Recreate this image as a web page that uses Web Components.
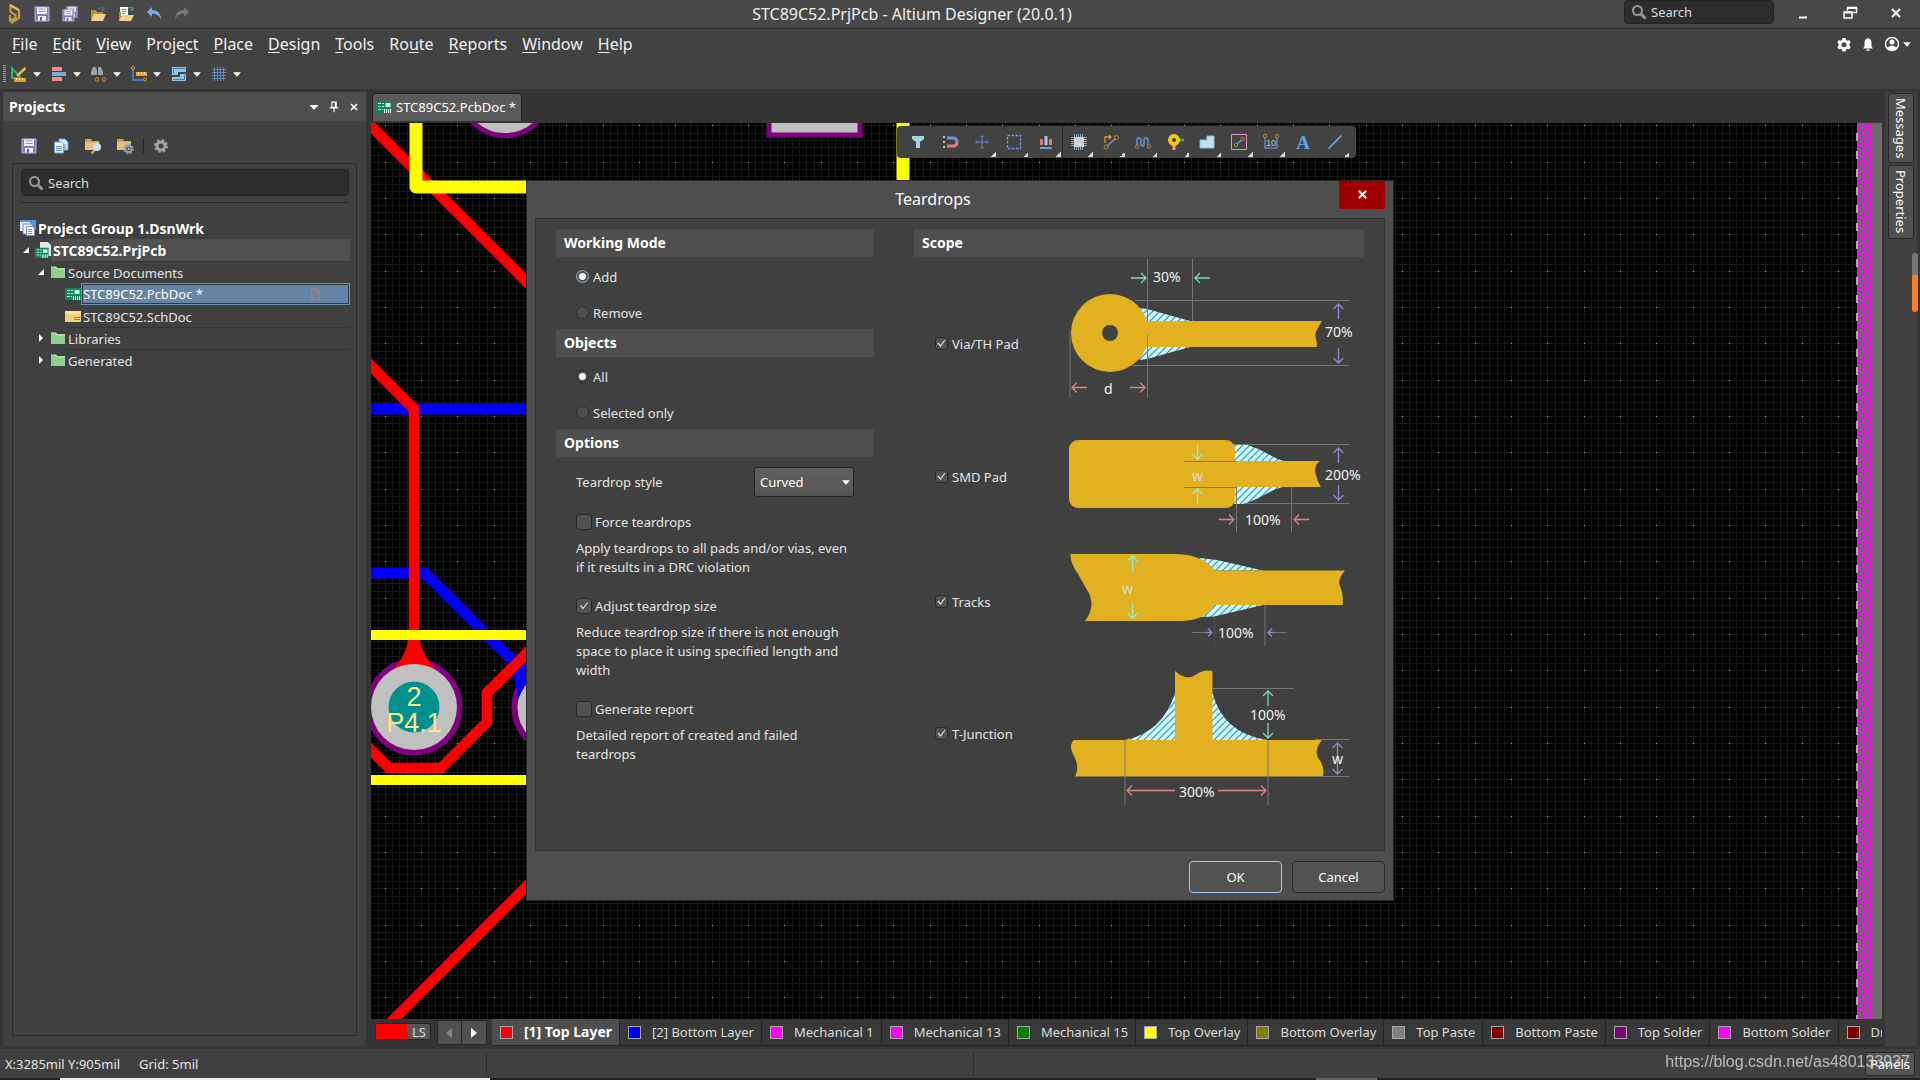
<!DOCTYPE html>
<html lang="en">
<head>
<meta charset="utf-8">
<title>STC89C52.PrjPcb - Altium Designer (20.0.1)</title>
<style>
    html, body { height: 100%; }
    body {
        margin: 0;
        display: flex;
        flex-direction: column;
        overflow: hidden;
        background: #353535;
        color: #e4e4e4;
        font: 13px/18px "Noto Sans", "Open Sans", sans-serif;
    }
    main {
        flex: 1;
        min-height: 0;
        display: flex;
        padding: 3px;
    }
    .document {
        flex: 1;
        min-width: 0;
        display: flex;
        flex-direction: column;
        margin: 0 3px 0 5px;
    }
    pcb-canvas { flex: 1; min-height: 0; }
    .watermark {
        position: fixed;
        right: 10px;
        bottom: 8px;
        color: rgba(225, 225, 225, .75);
        font: 16px/20px "Liberation Sans", sans-serif;
        pointer-events: none;
    }
</style>
</head>
<body>
<title-bar></title-bar>
<menu-bar></menu-bar>
<tool-strip></tool-strip>
<main>
    <projects-panel></projects-panel>
    <div class="document">
        <doc-tabs></doc-tabs>
        <pcb-canvas><active-bar></active-bar></pcb-canvas>
        <layer-tabs></layer-tabs>
    </div>
    <side-dock></side-dock>
</main>
<status-bar></status-bar>
<teardrop-dialog></teardrop-dialog>
<div class="watermark">https://blog.csdn.net/as480133937</div>

<script>
const FLOPPY = `<path d="M1 1h14v14H1z" fill="#7f7fb8"/><path d="M3 1h10v7H3z" fill="#f4f4fb"/><path d="M4.500 3h7M4.500 5.500h7" stroke="#8c8cbc"/><path d="M4 10h8v5H4z" fill="#eeeef8"/><path d="M6 11h2v4H6z" fill="#5b5b96"/><path d="M1 1h14v14H1z" fill="none" stroke="#b4b4dc"/>`;
const BOARD = `<path d="M0 2h16v12H0z" fill="#0b8a5c"/><path d="M2 4.500h3M2 7.500h3M2 10.500h3M6 4.500h2M6 7.500h2M6 10.500h1" stroke="#c8f4e0"/><path d="M9.500 4h5v4h-5z" fill="#d8f8ec"/><path d="M8.500 10v4M10.500 10v4M12.500 10v4M14.500 10v4" stroke="#eafff6"/>`;
const FOLDER = `<path d="M0 1h6l1 2h7v9H0z" fill="#cfa058"/><path d="M0 4h14v8H0z" fill="#e8bf7c"/>`;
const GEAR = `<circle cx="8" cy="8" r="4" fill="none" stroke="currentColor" stroke-width="3"/><circle cx="8" cy="8" r="6" fill="none" stroke="currentColor" stroke-width="2" stroke-dasharray="2.400 2.310"/>`;

// 16x16 artwork, keyed by name
const ICONS = {
    logo: `<path d="M4.500 6V-.5L13 4.500V12l-8 5M4.500 6l5 3v3L4 14.500V9" fill="none" stroke="#c39a4a" stroke-width="2.200"/><path d="M4.500-2L13 3v2L4.500 0z" fill="#e2c07a"/>`,
    save: FLOPPY,
    saveAll: `<g transform="translate(4 0) scale(.75)">${FLOPPY}</g><g transform="translate(0 3) scale(.8)">${FLOPPY}</g>`,
    open: `<path d="M1 4h5l1 2h6v9H1z" fill="#c08d45"/><path d="M4 8h12l-3 7H1z" fill="#f5cf92"/><path d="M8 3q4-3 6 1m0-3v3h-3" fill="none" stroke="#3c82a8"/>`,
    openDoc: `<path d="M2 1h8v9H2z" fill="#fff"/><path d="M3.500 3.500h5M3.500 5.500h5M3.500 7.500h3" stroke="#6a86b4"/><path d="M1 6h2v9H1z" fill="#c08d45"/><path d="M4 9h12l-3 6H1z" fill="#f5cf92"/><path d="M10 2q4-2 5 2m0-3v3h-3" fill="none" stroke="#4fa0c8"/>`,
    undo: `<path d="M1 6l5-5v3q9 0 9 10q-2-6.500-9-6.500V11z" fill="#7fa9ea"/>`,
    redo: `<path d="M15 6l-5-5v3q-9 0-9 10q2-6.500 9-6.500V11z" fill="#787878"/>`,
    search: `<circle cx="6.500" cy="6.500" r="4.500" fill="none" stroke="currentColor" stroke-width="2"/><path d="M10 10l4.500 4.500" stroke="currentColor" stroke-width="3"/>`,
    minimize: `<path d="M4 12.500h8" stroke="currentColor" stroke-width="2"/>`,
    restore: `<path d="M5.500 5.500V2.500h9v5h-4M2 7h8v6H2z" fill="none" stroke="currentColor" stroke-width="1.500"/><path d="M2 7.500h8M5 3h10" stroke="currentColor" stroke-width="2"/>`,
    close: `<path d="M4 4l8 8M12 4l-8 8" stroke="currentColor" stroke-width="2.200"/>`,
    cog: `<path d="M6.500 2h3l.4 1.800 1.500.9 1.800-.6 1.500 2.600-1.400 1.300v1.500l1.400 1.300-1.500 2.600-1.800-.6-1.500.9-.4 1.800h-3l-.4-1.800-1.500-.9-1.800.6L1.300 10.800l1.400-1.300V8L1.300 6.700l1.500-2.600 1.800.6 1.500-.9z" fill="currentColor"/><circle cx="8" cy="8.700" r="2.500" fill="#424242"/>`,
    bell: `<path d="M8 2q3.500 1 3.500 5v3.500l1.500 2H3l1.500-2V7Q4.500 3 8 2z" fill="currentColor"/><path d="M6.500 14h3" stroke="currentColor" stroke-width="1.500"/>`,
    user: `<circle cx="8" cy="8" r="6.500" fill="none" stroke="currentColor" stroke-width="1.500"/><circle cx="8" cy="6" r="2.600" fill="currentColor"/><path d="M3 12q5-5 10 0-5 4-10 0z" fill="currentColor"/>`,
    drafting: `<path d="M1 2v10h9z" fill="none" stroke="#28b478" stroke-width="2"/><path d="M14.500 2L6 10" stroke="#f0b040" stroke-width="2.500"/><path d="M3 12h12v4H3z" fill="#f09a28"/><path d="M5.500 12v2M8.500 12v2M11.500 12v2" stroke="#fff0c0"/>`,
    align: `<path d="M1 1h10v4H1zM1 11h10v4H1z" fill="#f08c8c"/><path d="M1 6h14v4H1z" fill="#70aee4"/>`,
    find: `<path d="M2 1h3l1 4v4H0V6zM7 1h3l2 5v3H7V5z" fill="#96a4ac"/><circle cx="6" cy="13.500" r="1.800" fill="none" stroke="#d89a20"/><circle cx="13" cy="13.500" r="1.800" fill="none" stroke="#d89a20"/>`,
    dimension: `<path d="M2 3v11h11" fill="none" stroke="#4a78b4" stroke-width="2"/><circle cx="2" cy="2" r="1.500" fill="none" stroke="#e0a020"/><circle cx="14" cy="13.500" r="1.500" fill="#424242" stroke="#e0a020"/><path d="M5 6h11v4H5z" fill="#f0a030"/><path d="M7.500 6v2M10.500 6v2M13.500 6v2" stroke="#fff0c0"/>`,
    room: `<path d="M1 1h14v5H7v3H1z" fill="#8fc4ea"/><path d="M15 15H1v-4h8V8h6z" fill="#8fc4ea"/><path d="M2.500 7V2.500H14M2 13.500h11.500V9" fill="none" stroke="#3f78b0"/>`,
    grid: `<path d="M3.500 1v14M6.500 1v14M9.500 1v14M12.500 1v14M1 3.500h14M1 6.500h14M1 9.500h14M1 12.500h14" stroke="#6088bc"/>`,
    caret: `<path d="M3.500 6h9L8 11z" fill="currentColor"/>`,
    pin: `<path d="M5.500 2.500h5v6h-5zM3 9h10M8 9v5M9.500 3v6" fill="none" stroke="currentColor" stroke-width="1.300"/>`,
    docs: `<path d="M6 1h6l3 3v8H6z" fill="#d9ecfa" stroke="#6f9ec4"/><path d="M1.500 4h7l2 2v9h-9z" fill="#eef6fc" stroke="#6f9ec4"/><path d="M3 8.500h6M3 10.500h6M3 12.500h6M12 6v5" stroke="#4a88c0"/>`,
    folderFind: `${FOLDER}<path d="M10.500 11l-4 4.500" stroke="#d8a24c" stroke-width="2.500"/><circle cx="12" cy="9" r="4" fill="#c9e2ee"/>`,
    folderGear: `${FOLDER}<circle cx="11.500" cy="11" r="3.200" fill="#404040" stroke="#93a0a6" stroke-width="2.200"/><circle cx="11.500" cy="11" r="4.800" fill="none" stroke="#93a0a6" stroke-width="1.200" stroke-dasharray="1.900 1.870"/><circle cx="11.500" cy="11" r="1" fill="#c8d0d4"/>`,
    gear: GEAR,
    group: `<path d="M0 0h16v10H0z" fill="#5b8fe0"/><path d="M0 2h10v9H0z" fill="#dfe9f8"/><path d="M3 4h9v10H3z" fill="#e9f0fa" stroke="#7d8fae"/><path d="M6.500 6.500h6l2 2v7h-8z" fill="#f6faff" stroke="#7d8fae"/><path d="M8 9.500h4M8 11.500h4M8 13.500h4" stroke="#6a8ac0"/>`,
    project: `<path d="M5 0h8l3 3v11H5z" fill="#e6e6f0"/><g transform="translate(0 4) scale(.85)">${BOARD}</g>`,
    board: BOARD,
    folder: `<path d="M1 3h5l1 1h8v10H1z" fill="#8fcf8a"/><path d="M1 3h5l1 2h8" fill="none" stroke="#c4eabf"/>`,
    sch: `<path d="M0 3h16v11H0z" fill="#f0d078"/><path d="M0 3h16v3H0z" fill="#f8e4a4"/><path d="M9 9.500h6M9 11.500h6" stroke="#a07c30"/>`,
    changed: `<path d="M4 2.500h5l3 3v8H4zM9 2.500v3h3" fill="none" stroke="#e86464" stroke-width="1.200"/>`,
    filter: `<path d="M2 2h12v3l-4 3v6H6V8L2 5z" fill="#a8d4ea"/>`,
    snap: `<path d="M1 3h2M1 8h2M1 13h2" stroke="#a8c8b8" stroke-width="2"/><path d="M5 4h6q4 0 4 4" fill="none" stroke="#6c94dc" stroke-width="3"/><path d="M15 8q0 4-4 4H5" fill="none" stroke="#e87888" stroke-width="3"/>`,
    cross: `<path d="M8 2v12M2 8h12M6.500 3L8 1.500 9.500 3M6.500 13L8 14.500 9.500 13M3 6.500L1.500 8 3 9.500M13 6.500L14.500 8 13 9.500" fill="none" stroke="#6f86d8"/>`,
    marquee: `<path d="M1.500 1.500h13v13h-13z" fill="none" stroke="#7a9cf0" stroke-width="1.300" stroke-dasharray="2.500 1.500"/>`,
    distribute: `<path d="M2 5h3v6H2zM11 5h3v6h-3z" fill="#e87070"/><path d="M6.500 2h3v9h-3z" fill="#98cdf0"/><path d="M2 14h12" stroke="#6c9ce0" stroke-width="2"/>`,
    chip: `<path d="M3.500 0v16M5.500 0v16M7.500 0v16M9.500 0v16M11.500 0v16M0 3.500h16M0 5.500h16M0 7.500h16M0 9.500h16M0 11.500h16" stroke="#8cacc4"/><path d="M3 3h10v10H3z" fill="#ccd2d6"/>`,
    route: `<path d="M2 9V3h6M6 1l2 2-2 2" fill="none" stroke="#e09a20" stroke-width="1.300"/><path d="M3 13L13 4" stroke="#5c84c4" stroke-width="2"/><circle cx="3" cy="13" r="2" fill="#424242" stroke="#c08a28"/><circle cx="13.500" cy="3.500" r="2" fill="#424242" stroke="#c08a28"/>`,
    tune: `<path d="M2 12V6q0-2 2-2t2 2v4q0 2 1.500 2T9 10V6q0-2 2-2t2 2v6" fill="none" stroke="#5c84c4" stroke-width="1.800"/><circle cx="2" cy="12.500" r="1.700" fill="#424242" stroke="#c08a28"/><circle cx="14" cy="12.500" r="1.700" fill="#424242" stroke="#c08a28"/>`,
    via: `<path d="M8 6h9" stroke="#5cae3c" stroke-width="2.500"/><path d="M7 8v8" stroke="#f0a850" stroke-width="3"/><circle cx="7" cy="6" r="4" fill="#404040" stroke="#f0c818" stroke-width="4"/>`,
    polygon: `<path d="M1 6h7V2h7v12H1z" fill="#bfe2f0" stroke="#8cc4e0"/>`,
    keepout: `<path d="M.5.500h15v15H.5z" fill="none" stroke="#f08ad8"/><path d="M4.500 11L12 5" stroke="#5c84c4" stroke-width="2"/><circle cx="5" cy="11" r="1.700" fill="#424242" stroke="#c08a28"/><circle cx="11.500" cy="5" r="1.700" fill="#424242" stroke="#c08a28"/>`,
    size: `<path d="M2 3v11h12V3" fill="none" stroke="#5c84c4" stroke-width="1.500"/><circle cx="2" cy="2" r="1.700" fill="#424242" stroke="#c08a28"/><circle cx="14" cy="2" r="1.700" fill="#424242" stroke="#c08a28"/><text x="8" y="11.500" font-family="Liberation Sans, sans-serif" font-size="9" text-anchor="middle" fill="#c8c8c8">10</text>`,
    text: `<text x="8" y="15" font-family="Liberation Serif, serif" font-size="19" font-weight="bold" text-anchor="middle" fill="#5fa4ea">A</text>`,
    line: `<path d="M1.500 14.500L14.500 1.500" stroke="#5c9ae0" stroke-width="2"/>`
};

const icon = (name, size = 16) => `<svg class="icon" width="${size}" height="${size}" viewBox="0 0 16 16" aria-hidden="true">${ICONS[name]}</svg>`;

const RESET = `
    * { box-sizing: border-box; }
    button { border: 0; padding: 0; background: none; color: inherit; font: inherit; display: inline-flex; align-items: center; justify-content: center; }
    input, select { font: inherit; color: inherit; }
    a { color: inherit; text-decoration: none; }
    svg { display: block; flex: none; overflow: visible; }
`;

class UiElement extends HTMLElement {
    constructor() {
        super();
        this.attachShadow({ mode: 'open' });
        this.render();
    }
    render() {
        this.shadowRoot.innerHTML = `<style>${RESET}${this.css()}</style>${this.html()}`;
    }
    css() { return ''; }
    html() { return ''; }
}

class SearchField extends UiElement {
    css() {
        return `
            :host { display: block; }
            label {
                display: flex; align-items: center; gap: 4px; height: 100%; padding: 0 6px;
                background: #2d2d2d; border: 1px solid #232323; border-radius: 4px; color: #999;
            }
            input { flex: 1; min-width: 0; border: 0; padding: 0; background: none; outline: 0; }
            input, input::placeholder { color: #dcdcdc; opacity: 1; }
        `;
    }
    html() {
        return `<label>${icon('search')}<input type="search" placeholder="Search" aria-label="Search"></label>`;
    }
}
customElements.define('search-field', SearchField);

class TitleBar extends UiElement {
    css() {
        return `
            :host { display: flex; height: 29px; background: #484848; border-bottom: 1px solid #2c2c2c; box-sizing: border-box; }
            .quick { width: 200px; display: flex; align-items: center; gap: 12px; padding-left: 6px; box-sizing: border-box; }
            h1 { flex: 1; margin: 0; font-size: 16px; font-weight: 400; line-height: 28px; text-align: center; color: #f0f0f0; }
            search-field { width: 150px; height: 24px; }
            .window { width: 146px; display: flex; align-items: center; justify-content: space-between; padding: 0 16px 2px 21px; color: #fff; }
        `;
    }
    html() {
        const quick = ['logo', 'save', 'saveAll', 'open', 'openDoc', 'undo', 'redo'];
        return `
            <div class="quick">${quick.map(name => `<button aria-label="${name}">${icon(name)}</button>`).join('')}</div>
            <h1>STC89C52.PrjPcb - Altium Designer (20.0.1)</h1>
            <search-field></search-field>
            <div class="window">
                ${['minimize', 'restore', 'close'].map(name => `<button aria-label="${name}">${icon(name)}</button>`).join('')}
            </div>
        `;
    }
}
customElements.define('title-bar', TitleBar);

class MenuBar extends UiElement {
    css() {
        return `
            :host { display: flex; justify-content: space-between; height: 33px; background: #424242; color: #f0f0f0; }
            nav { display: flex; gap: 15px; padding-left: 12px; font-size: 16px; line-height: 31px; }
            u { text-underline-offset: 2px; }
            .account { display: flex; align-items: center; gap: 8px; padding: 0 6px 3px 0; color: #fff; }
        `;
    }
    html() {
        const menus = ['_File', '_Edit', '_View', 'Proje_ct', '_Place', '_Design', '_Tools', 'Ro_ute', '_Reports', '_Window', '_Help'];
        const links = menus.map(m => `<a href="#">${m.replace(/_(.)/, '<u>$1</u>')}</a>`).join('');
        return `
            <nav>${links}</nav>
            <div class="account">
                <button aria-label="Preferences">${icon('cog')}</button>
                <button aria-label="Notifications">${icon('bell')}</button>
                <button aria-label="Account">${icon('user')}${icon('caret', 14)}</button>
            </div>
        `;
    }
}
customElements.define('menu-bar', MenuBar);

class ToolStrip extends UiElement {
    css() {
        return `
            :host { display: flex; align-items: center; height: 27px; padding: 0 3px 4px; box-sizing: border-box; background: #424242; }
            .grip { width: 3px; height: 18px; margin-right: 5px; background: repeating-linear-gradient(#a0a0a0 0 1px, transparent 1px 2px); }
            button { width: 40px; gap: 3px; justify-content: flex-start; color: #fff; }
        `;
    }
    html() {
        const tools = ['drafting', 'align', 'find', 'dimension', 'room', 'grid'];
        return `<span class="grip"></span>${tools.map(name => `<button aria-label="${name}">${icon(name)}${icon('caret', 14)}</button>`).join('')}`;
    }
}
customElements.define('tool-strip', ToolStrip);

class TreeItem extends UiElement {
    connectedCallback() { this.render(); }
    css() {
        return `
            :host { display: flex; align-items: center; height: 22px; padding-left: calc(var(--level, 0) * 15px); }
            .arrow { width: 16px; height: 16px; margin: 0 3px 0 -19px; }
            .label { flex: 1; align-self: stretch; display: flex; align-items: center; padding-left: 2px; border-top: 1px solid transparent; }
            :host([rule]) .label { border-top-color: #333; }
            :host([strong]) { font-size: 14px; font-weight: 700; color: #fff; }
            :host([current]) .label { background: #505050; }
            :host([selected]) .label { justify-content: space-between; padding-left: 1px; padding-right: 26px; background: #6484a6; border: 1px solid #6a94bc; box-shadow: inset 0 0 0 1px #2f3a46; color: #fff; }
        `;
    }
    html() {
        const name = this.getAttribute('icon');
        if (!name) {
            return '';
        }
        const arrows = { open: '<path d="M13 5v6H7z" fill="#fff"/>', closed: '<path d="M8 4l4 4-4 4z" fill="#fff"/>' };
        return `
            <svg class="arrow" viewBox="0 0 16 16">${arrows[this.getAttribute('arrow')] || ''}</svg>
            ${icon(name)}
            <span class="label"><slot></slot>${this.hasAttribute('selected') ? icon('changed', 15) : ''}</span>
        `;
    }
}
customElements.define('tree-item', TreeItem);

class ProjectsPanel extends UiElement {
    css() {
        return `
            :host { width: 363px; display: flex; flex-direction: column; background: #404040; }
            header { display: flex; align-items: center; height: 29px; padding: 0 2px 0 6px; background: #4e4e4e; }
            h2 { flex: 1; margin: 0; font-size: 14px; color: #fff; }
            header button { width: 20px; color: #fff; }
            .tools { display: flex; align-items: center; gap: 16px; height: 42px; padding: 8px 18px 0; color: #98a4aa; }
            .tools hr { width: 1px; height: 16px; margin: 0 -7px 0 -6px; border: 0; background: #222; }
            .box { flex: 1; margin: 0 9px 10px; padding: 5px 7px 0 8px; border: 1px solid #2a2a2a; }
            search-field { height: 27px; }
            .rule { margin: 6px 0 14px; border-bottom: 1px solid #262626; }
            .tree { margin: 0 -1px; }
        `;
    }
    html() {
        return `
            <header>
                <h2>Projects</h2>
                <button aria-label="Panel menu">${icon('caret')}</button>
                <button aria-label="Pin">${icon('pin', 14)}</button>
                <button aria-label="Close">${icon('close', 12)}</button>
            </header>
            <div class="tools">
                ${['save', 'docs', 'folderFind', 'folderGear'].map(name => `<button aria-label="${name}">${icon(name)}</button>`).join('')}
                <hr><button aria-label="Settings">${icon('gear')}</button>
            </div>
            <div class="box">
                <search-field></search-field>
                <div class="rule"></div>
                <div class="tree">
                    <tree-item icon="group" strong style="--level:0">Project Group 1.DsnWrk</tree-item>
                    <tree-item icon="project" arrow="open" strong current style="--level:1">STC89C52.PrjPcb</tree-item>
                    <tree-item icon="folder" arrow="open" rule style="--level:2">Source Documents</tree-item>
                    <tree-item icon="board" selected style="--level:3">STC89C52.PcbDoc *</tree-item>
                    <tree-item icon="sch" style="--level:3">STC89C52.SchDoc</tree-item>
                    <tree-item icon="folder" arrow="closed" rule style="--level:2">Libraries</tree-item>
                    <tree-item icon="folder" arrow="closed" rule style="--level:2">Generated</tree-item>
                </div>
            </div>
        `;
    }
}
customElements.define('projects-panel', ProjectsPanel);

class DocTabs extends UiElement {
    css() {
        return `
            :host { display: flex; height: 31px; padding: 1px 0 2px 1px; box-sizing: border-box; }
            button { gap: 4px; padding: 0 5px 2px 3px; background: #5a5a5a; border: 1px solid #222; border-bottom: 0; border-radius: 4px 4px 0 0; color: #fff; }
        `;
    }
    html() {
        return `<button>${icon('board')}STC89C52.PcbDoc *</button>`;
    }
}
customElements.define('doc-tabs', DocTabs);

class PcbCanvas extends UiElement {
    css() {
        return `
            :host { display: flex; position: relative; overflow: hidden; background: #000; }
            .board { flex: 1; min-width: 0; height: 100%; overflow: hidden; }
            .edge { width: 26px; height: 100%; overflow: hidden; }
            ::slotted(active-bar) { position: absolute; left: 526px; top: 3px; }
        `;
    }
    html() {
        // minor grid of 15 steps, with a bright dot on every fifth crossing
        const minor = [0, 7, 14, 22, 29, 36, 43, 50, 58, 65, 72, 80, 87, 94, 102];
        const lines = minor.map(n => `M${n} 0h1v109h-1zM0 ${n}h109v1H0z`).join('');
        const dots = [0, 36, 72].map(x => [0, 36, 72].map(y => `M${x} ${y}h1v1h-1z`).join('')).join('');
        return `
            <svg class="board">
                <defs>
                    <pattern id="grid" x="14" y="39" width="109" height="109" patternUnits="userSpaceOnUse">
                        <path d="${lines}" fill="#17181a"/><path d="${dots}" fill="#aaa"/>
                    </pattern>
                </defs>
                <rect width="100%" height="100%" fill="url(#grid)"/>
                <g fill="none" stroke-width="10" transform="translate(-371 -123)">
                    <path d="M360 409H540M360 573H425L525 673" stroke="#00f" stroke-width="11"/>
                    <circle cx="505" cy="90" r="45.500" fill="#c0c0c0" stroke="purple" stroke-width="5"/>
                    <path d="M769 110h91v25h-91z" fill="#c0c0c0" stroke="purple" stroke-width="5"/>
                    <path d="M351 106L540 295M361 356L414 409V640M360 739L389 768H441L487 722V693L530 650M374 1039L540 873" stroke="red" stroke-width="10.500"/>
                    <circle cx="414" cy="707" r="45.500" stroke="purple" stroke-width="6"/>
                    <circle cx="560" cy="707" r="45.500" fill="#c0c0c0" stroke="purple" stroke-width="6"/>
                    <path d="M409 635Q407 657 387 677L414 690 443 677Q421 657 419 635z" fill="red"/>
                    <path d="M508 658L517 690V705Q519 692 530 680V660L522 652z" fill="#00f"/>
                    <path d="M487 693L530 650" stroke="red" stroke-width="10.500"/>
                    <circle cx="414" cy="707" r="43" fill="#c0c0c0"/>
                    <circle cx="414" cy="707" r="25.500" fill="#009090"/>
                    <path d="M416 110V187H540M903 110V190" stroke="#ff0" stroke-width="13" stroke-linejoin="round"/>
                    <path d="M360 635H540M360 780H540" stroke="#ff0"/>
                    <g fill="#ffe68c" font-family="Liberation Sans, sans-serif" font-size="27" text-anchor="middle">
                        <text x="414" y="706">2</text><text x="414" y="732">P4.1</text>
                    </g>
                </g>
            </svg>
            <svg class="edge">
                <defs>
                    <pattern id="hatch" width="7" height="9" patternUnits="userSpaceOnUse">
                        <path d="M0 0L7 9M7 0L0 9" stroke="#f0f" stroke-width="1.300"/>
                    </pattern>
                    <pattern id="dash" width="2" height="18" patternUnits="userSpaceOnUse">
                        <path d="M0 10h2v9H0z" fill="#b8a8b8"/>
                    </pattern>
                </defs>
                <rect x="1" width="100%" height="100%" fill="#6e6a67"/>
                <rect x="1" width="14" height="100%" fill="url(#hatch)"/>
                <path d="M1.500 0v2000M14.500 0v2000" stroke="#f0f"/>
                <rect width="2" height="100%" fill="url(#dash)"/>
            </svg>
            <slot></slot>
        `;
    }
}
customElements.define('pcb-canvas', PcbCanvas);

class ActiveBar extends UiElement {
    css() {
        return `
            :host { display: flex; height: 32px; padding: 0 5px; background: #424242; border-radius: 4px; }
            button { position: relative; width: 32px; }
            .more::after { content: ""; position: absolute; right: 2px; bottom: 1px; width: 5px; height: 5px; background: linear-gradient(135deg, transparent 50%, #d8d8d8 50%); }
            .split { width: 33px; padding-right: 1px; box-shadow: inset -1px 0 #2a2a2a; }
        `;
    }
    html() {
        const tools = ['filter', 'snap', 'cross', 'marquee', 'distribute', 'chip', 'route', 'tune', 'via', 'polygon', 'keepout', 'size', 'text', 'line'];
        const plain = ['filter', 'snap', 'text'];
        return tools.map(name => `<button class="${plain.includes(name) ? '' : 'more'} ${name === 'distribute' ? 'split' : ''}" aria-label="${name}">${icon(name)}</button>`).join('');
    }
}
customElements.define('active-bar', ActiveBar);

class LayerTabs extends UiElement {
    css() {
        return `
            :host { display: flex; align-items: flex-start; height: 27px; overflow: hidden; color: #dcdcdc; }
            button { flex: none; }
            .set { height: 17px; margin: 4px 6px 0 4px; padding-right: 4px; background: #555; border: 1px solid #262626; border-radius: 3px; }
            .set i { width: 31px; height: 15px; background: red; margin-right: 5px; }
            .step { width: 25px; height: 25px; margin-top: 1px; background: #505050; border: 1px solid #262626; }
            .step + .step { border-left: 0; color: #fff; }
            .step:disabled { color: #888; }
            .tab { height: 27px; padding: 0 7px 0 8px; gap: 11px; white-space: nowrap; border-right: 1px solid #222; border-bottom: 1px solid #222; background: #383838; }
            .tab.active { margin-left: 5px; background: #4f4f4f; color: #fff; font-size: 14px; font-weight: 700; }
            .tab i { width: 13px; height: 13px; border: 1px solid #a8a8a8; background: var(--c); }
        `;
    }
    html() {
        const layers = [
            ['[1] Top Layer', 'red'],
            ['[2] Bottom Layer', '#00f'],
            ['Mechanical 1', '#f0f'],
            ['Mechanical 13', '#f0f'],
            ['Mechanical 15', 'green'],
            ['Top Overlay', '#ff0'],
            ['Bottom Overlay', 'olive'],
            ['Top Paste', 'gray'],
            ['Bottom Paste', 'maroon'],
            ['Top Solder', 'purple'],
            ['Bottom Solder', '#f0f'],
            ['Dr', 'maroon']
        ];
        return `
            <button class="set"><i></i>LS</button>
            <button class="step" disabled aria-label="Previous"><svg width="6" height="10"><path d="M6 0v10L0 5z" fill="currentColor"/></svg></button>
            <button class="step" aria-label="Next"><svg width="6" height="10"><path d="M0 0v10l6-5z" fill="currentColor"/></svg></button>
            ${layers.map(([name, color], i) => `<button class="tab ${i ? '' : 'active'}" style="--c:${color}"><i></i>${name}</button>`).join('')}
        `;
    }
}
customElements.define('layer-tabs', LayerTabs);

class SideDock extends UiElement {
    css() {
        return `
            :host { position: relative; width: 32px; display: flex; flex-direction: column; align-items: flex-start; gap: 2px; padding: 1px 3px; box-sizing: border-box; background: #414141; }
            button { width: 26px; padding: 4px 0; writing-mode: vertical-rl; background: #505050; border: 1px solid #262626; border-radius: 3px; color: #fff; }
            .handle { position: absolute; right: -1px; top: 161px; width: 6px; height: 59px; border-radius: 3px; background: linear-gradient(#777 22px, #ff7f1e 22px); }
        `;
    }
    html() {
        return `<button>Messages</button><button>Properties</button><span class="handle"></span>`;
    }
}
customElements.define('side-dock', SideDock);

class StatusBar extends UiElement {
    css() {
        return `
            :host { display: block; height: 31px; background: #404040; }
            .row { display: flex; height: 29px; padding: 3px 5px; }
            .row > span { line-height: 24px; }
            .position { width: 134px; }
            .grid { width: 348px; border-right: 1px solid #2c2c2c; }
            .message { width: 487px; border-right: 1px solid #2c2c2c; }
            button { width: 50px; height: 24px; margin-left: auto; background: #555; border: 1px solid #262626; border-radius: 3px; color: #fff; }
            .strip { height: 2px; background: linear-gradient(90deg, #222 60px, #eee 60px 490px, #222 490px 1316px, #666 1316px 1377px, #222 1377px); }
        `;
    }
    html() {
        return `
            <div class="row">
                <span class="position">X:3285mil Y:905mil</span><span class="grid">Grid: 5mil</span><span class="message"></span>
                <button>Panels</button>
            </div>
            <div class="strip"></div>
        `;
    }
}
customElements.define('status-bar', StatusBar);

class GroupTitle extends UiElement {
    css() {
        return `
            :host { display: block; height: 28px; padding-left: 8px; background: #4e4e4e; color: #fff; font-size: 14px; font-weight: 700; line-height: 28px; }
        `;
    }
    html() { return `<slot></slot>`; }
}
customElements.define('group-title', GroupTitle);

// arrow with its head at (x, y), pointing along dir, with a shaft of len
function arrow(x, y, dir, len = 15, head = 5) {
    const turn = { right: 0, down: 90, left: 180, up: 270 }[dir];
    return `<path transform="translate(${x} ${y}) rotate(${turn})" d="M${-len} 0H0M${-head}-${head}L0 0-${head} ${head}"/>`;
}

const FIGURES = {
    via: `
        <g class="fill"><path d="M1139 307L1147 308 1192 320.500H1144zM1139 359L1147 358 1192 345.500H1144z"/></g>
        <path class="dim" d="M1135 299.500H1349M1132 364.500H1349M1070 329V397M1147.500 258V397M1192.500 258V320"/>
        <g class="copper"><circle cx="1110" cy="332" r="39"/><path d="M1140 320H1322Q1314 332 1315.500 336T1317 346H1140z"/></g>
        <circle cx="1110" cy="332" r="8" fill="#404040"/>
        <path class="dim" d="M1147.500 333V346" opacity=".6"/>
        <g class="teal">${arrow(1146, 277, 'right')}${arrow(1195, 277, 'left')}</g>
        <g class="violet">${arrow(1338.5, 303, 'up')}${arrow(1338.5, 362, 'down')}</g>
        <g class="pink">${arrow(1072, 386.5, 'left')}${arrow(1145, 386.5, 'right')}</g>
        <text x="1153" y="281">30%</text><text x="1325" y="336">70%</text><text x="1104" y="393">d</text>`,
    smd: `
        <g class="fill"><path d="M1234 443.500H1246Q1258 447 1270 454T1290 460.500H1234zM1234 503H1244Q1256 499 1268 492T1290 485.500H1234z"/></g>
        <path class="dim" d="M1235 443.500H1349M1244 502.500H1349M1236.500 486V531M1291.500 486V531"/>
        <g class="copper"><rect x="1069" y="439" width="166" height="68" rx="9"/><path d="M1230 460H1320Q1314 464 1315.500 472T1321 486H1230z"/></g>
        <path class="dim" d="M1184 460.500H1236M1184 486.500H1236"/>
        <g class="teal bright">${arrow(1197.5, 458, 'down')}${arrow(1197.5, 488, 'up')}</g>
        <g class="violet">${arrow(1338.5, 447, 'up')}${arrow(1338.5, 499, 'down')}</g>
        <g class="pink">${arrow(1234, 518.5, 'right')}${arrow(1294, 518.5, 'left')}</g>
        <text x="1192" y="480" class="soft">w</text><text x="1325" y="479">200%</text><text x="1245" y="524">100%</text>`,
    tracks: `
        <g class="fill"><path d="M1200 557L1217 559 1263 569.500H1200zM1200 616L1214 615.500 1263 604H1200z"/></g>
        <path class="dim" d="M1265 604V645"/><path class="dim" d="M1214.500 615V645" opacity=".3"/>
        <path class="copper" d="M1070.500 553H1173Q1203 553 1215 569.500H1345Q1337 579 1340 585T1343 604H1215Q1205 620 1180 620H1085Q1097 604 1087 589L1078 573Q1070 562 1070.500 553z"/>
        <g class="teal bright">${arrow(1132.5, 555, 'up')}${arrow(1132.5, 617, 'down')}</g>
        <path class="dim" d="M1192 631.500H1207M1272 631.500H1287"/>
        <g class="violet">${arrow(1212, 631.5, 'right', 6, 4)}${arrow(1268, 631.5, 'left', 6, 4)}</g>
        <text x="1122" y="593" class="soft">w</text><text x="1218" y="637">100%</text>`,
    junction: `
        <g class="fill"><path d="M1175 692Q1162 732 1125 739H1175zM1212 690Q1222 732 1267 739H1212z"/></g>
        <path class="copper" d="M1175 670Q1187 681 1197 673 1204 668 1212.500 670V739H1322Q1313 750 1319 758T1323 775.500H1075Q1080 766 1074 755T1074 739H1175z"/>
        <path class="dim" d="M1213 687.500H1294M1125 739V804M1268 739V804M1315 738.500H1349M1315 775.500H1349"/>
        <g class="teal">${arrow(1268, 690, 'up')}${arrow(1268, 737, 'down')}</g>
        <g class="violet">${arrow(1337.5, 742, 'up')}${arrow(1337.5, 773, 'down', 16)}</g>
        <g class="pink">${arrow(1127, 789.5, 'left', 48)}${arrow(1266, 789.5, 'right', 48)}</g>
        <text x="1250" y="719">100%</text><text x="1332" y="763">w</text><text x="1179" y="796">300%</text>`
};

const CHECK_CSS = `
    input[type=checkbox] {
        appearance: none; flex: none; width: 16px; height: 16px; margin: 0;
        background: #525252; border: 1px solid #282828; border-radius: 3px;
    }
    input[type=checkbox]:checked {
        background: #525252 url('data:image/svg+xml,<svg xmlns="http://www.w3.org/2000/svg" viewBox="0 0 14 14"><path d="M3.500 6.500l2.500 3 4.500-6" fill="none" stroke="%23ddd" stroke-width="1.200"/></svg>') center / 14px no-repeat;
    }
`;

class ScopeRow extends UiElement {
    connectedCallback() {
        this.style.setProperty('--h', `${this.getAttribute('height')}px`);
        this.render();
    }
    css() {
        return `
            :host { display: flex; align-items: center; height: var(--h); padding-left: 21px; }
            label { display: flex; align-items: center; width: 129px; gap: 4px; }
            svg.figure { flex: 1; height: 100%; font-size: 14px; }
            .copper { fill: #e2b120; }
            .fill { fill: url(#stripes); }
            .dim { fill: none; stroke: #777; }
            .teal, .violet, .pink { fill: none; stroke-width: 1.3; }
            .teal { stroke: #7fd6c6; }
            .teal.bright { stroke: #90f0d8; }
            .violet { stroke: #8c8cd0; }
            .pink { stroke: #d88884; }
            text { fill: #f0f0f0; }
            text.soft { fill: #ddd; }
            ${CHECK_CSS}
            input[type=checkbox] { width: 13px; height: 13px; }
        `;
    }
    html() {
        const top = this.getAttribute('top');
        const height = this.getAttribute('height');
        return `
            <label><input type="checkbox" checked><slot></slot></label>
            <svg class="figure" viewBox="1064 ${top} 300 ${height}" preserveAspectRatio="xMinYMid">
                <defs>
                    <pattern id="stripes" width="7" height="7" patternUnits="userSpaceOnUse">
                        <path d="M0 0h7v7H0z" fill="#c8faff"/><path d="M-1 8L8-1M-1 1L1-1M6 8L8 6" stroke="#3a8cc0" stroke-width="1.100"/>
                    </pattern>
                </defs>
                ${FIGURES[this.getAttribute('figure')] || ''}
            </svg>
        `;
    }
}
customElements.define('scope-row', ScopeRow);

class TeardropDialog extends UiElement {
    css() {
        return `
            :host { position: fixed; inset: 0; display: grid; place-items: center; }
            form { width: 868px; background: #4e4e4e; border: 1px solid #2b2b2b; }
            header { display: flex; height: 37px; padding-right: 8px; }
            h2 { flex: 1; margin: 0; font-size: 16px; font-weight: 400; line-height: 36px; text-align: center; color: #fff; }
            header button { width: 46px; height: 28px; background: #a00000; color: #fff; }
            .body { display: grid; grid-template-columns: 318px 1fr; gap: 40px; height: 633px; margin: 0 8px; padding: 10px 20px; background: #404040; border: 1px solid #303030; }
            .radios { height: 72px; padding: 2px 20px 0; }
            .radios label { display: flex; align-items: center; gap: 4px; height: 36px; }
            input[type=radio] { appearance: none; width: 13px; height: 13px; margin: 0; border: 1px solid #2a2a2a; border-radius: 50%; background: #505050; }
            input[type=radio]:checked { background: radial-gradient(#fff 3px, #505050 4px); }
            .focused[type=radio] { border-color: #8ab4dc; }
            .options { padding: 10px 20px 0; }
            .style { display: flex; align-items: center; justify-content: space-between; height: 30px; margin-bottom: 15px; }
            .select { display: grid; width: 100px; align-items: center; }
            .select svg { grid-area: 1 / 1; justify-self: end; margin-right: 1px; color: #fff; pointer-events: none; }
            select { grid-area: 1 / 1; appearance: none; height: 30px; padding: 0 5px; background: linear-gradient(#606060, #545454); border: 1px solid #242424; border-radius: 3px; color: #fff; }
            .check { display: flex; align-items: center; gap: 3px; height: 20px; }
            p { margin: 7px 0 19px; line-height: 19px; }
            .scope { padding-top: 21px; }
            footer { display: flex; justify-content: flex-end; gap: 10px; padding: 10px 8px 7px; }
            footer button { width: 93px; height: 32px; background: #525252; border: 1px solid #2a2a2a; border-radius: 4px; color: #fff; }
            footer .default { border-color: #9ccbf5; }
            ${CHECK_CSS}
        `;
    }
    html() {
        return `
            <form>
                <header><h2>Teardrops</h2><button type="button" aria-label="Close">${icon('close', 15)}</button></header>
                <div class="body">
                    <div>
                        <group-title>Working Mode</group-title>
                        <div class="radios">
                            <label><input type="radio" name="mode" class="focused" checked>Add</label>
                            <label><input type="radio" name="mode">Remove</label>
                        </div>
                        <group-title>Objects</group-title>
                        <div class="radios">
                            <label><input type="radio" name="objects" checked>All</label>
                            <label><input type="radio" name="objects">Selected only</label>
                        </div>
                        <group-title>Options</group-title>
                        <div class="options">
                            <div class="style">
                                <label for="style">Teardrop style</label>
                                <span class="select"><select id="style"><option>Curved</option><option>Line</option></select>${icon('caret', 14)}</span>
                            </div>
                            <label class="check"><input type="checkbox">Force teardrops</label>
                            <p>Apply teardrops to all pads and/or vias, even if it results in a DRC violation</p>
                            <label class="check"><input type="checkbox" checked>Adjust teardrop size</label>
                            <p>Reduce teardrop size if there is not enough space to place it using specified length and width</p>
                            <label class="check"><input type="checkbox">Generate report</label>
                            <p>Detailed report of created and failed teardrops</p>
                        </div>
                    </div>
                    <div>
                        <group-title>Scope</group-title>
                        <div class="scope">
                            <scope-row figure="via" top="277" height="132">Via/TH Pad</scope-row>
                            <scope-row figure="smd" top="409" height="134">SMD Pad</scope-row>
                            <scope-row figure="tracks" top="543" height="116">Tracks</scope-row>
                            <scope-row figure="junction" top="659" height="148">T-Junction</scope-row>
                        </div>
                    </div>
                </div>
                <footer><button type="button" class="default">OK</button><button type="button">Cancel</button></footer>
            </form>
        `;
    }
}
customElements.define('teardrop-dialog', TeardropDialog);
</script>
</body>
</html>
